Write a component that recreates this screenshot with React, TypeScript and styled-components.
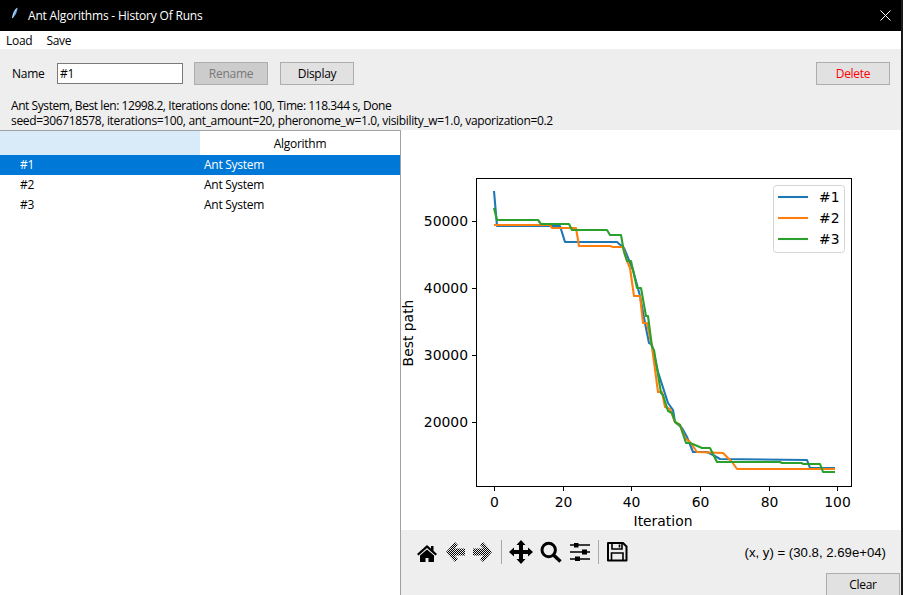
import styled, { createGlobalStyle } from "styled-components";

const GlobalStyle = createGlobalStyle`
  html, body {
    margin: 0;
    padding: 0;
    background: #f0f0f0;
  }
  * {
    box-sizing: border-box;
  }
`;

const Window = styled.div`
  display: flex;
  flex-direction: column;
  width: 903px;
  height: 595px;
  overflow: hidden;
  padding-right: 2px;
  background: #1a1a1a;
  font-family: "Open Sans", "Noto Sans", "Liberation Sans", sans-serif;
  font-size: 12px;
  letter-spacing: -0.28px;
  color: #000;
`;

const TitleBar = styled.div`
  display: flex;
  align-items: center;
  flex: 0 0 31px;
  padding: 0 10px 1px 11px;
  background: #000;
  color: #fff;
`;

const TitleIcon = styled.svg`
  display: block;
  width: 8px;
  height: 12px;
  margin-bottom: 4px;
`;

const TitleText = styled.div`
  flex: 1;
  margin-left: 9px;
  letter-spacing: -0.19px;
`;

const MenuBar = styled.div`
  display: flex;
  flex: 0 0 18px;
  gap: 14px;
  align-items: center;
  padding: 0 6px;
  background: #fff;
`;

const TopPanel = styled.div`
  flex: 0 0 81px;
  padding: 13px 11px 0 12px;
  background: #eeeeee;
`;

const FormRow = styled.div`
  display: flex;
  align-items: center;
`;

const NameLabel = styled.span`
  width: 45px;
`;

const NameInput = styled.input`
  width: 126px;
  height: 21px;
  margin-right: 11px;
  padding: 0 2px;
  border: 1px solid #7a7a7a;
  background: #fff;
  font: inherit;
  letter-spacing: inherit;
  color: #000;
  outline: none;
`;

const ButtonGroup = styled.div`
  display: flex;
  gap: 12px;
`;

const Button = styled.button<{ $tone?: "muted" | "danger" }>`
  flex: none;
  width: 74px;
  height: 23px;
  padding: 0;
  border: 1px solid #adadad;
  background: ${(p) => (p.$tone === "muted" ? "#cccccc" : "#e1e1e1")};
  font: inherit;
  letter-spacing: inherit;
  color: ${(p) =>
    p.$tone === "muted" ? "#787878" : p.$tone === "danger" ? "#ff0000" : "#000"};
`;

const Spacer = styled.div`
  flex: 1;
`;

const InfoText = styled.div`
  margin: 13px 0 0 -1px;
`;

const InfoLine = styled.div<{ $spacing: number }>`
  height: 15px;
  line-height: 15px;
  white-space: nowrap;
  letter-spacing: ${(p) => p.$spacing}px;
`;

const Body = styled.div`
  display: flex;
  flex: 1;
  min-height: 0;
`;

const RunList = styled.div`
  flex: 0 0 401px;
  border-top: 1px solid #a0a0a0;
  border-right: 1px solid #a0a0a0;
  background: #fff;
`;

const HeaderRow = styled.div`
  display: grid;
  grid-template-columns: 200px 200px;
  height: 24px;
  align-items: center;
`;

const TreeHeader = styled.div`
  height: 100%;
  background: #d9ebf9;
`;

const AlgoHeader = styled.div`
  text-align: center;
`;

const RunRow = styled.div<{ $selected?: boolean }>`
  display: grid;
  grid-template-columns: 200px 200px;
  height: 20px;
  padding-bottom: 1px;
  align-items: center;
  background: ${(p) => (p.$selected ? "#0078d7" : "#fff")};
  color: ${(p) => (p.$selected ? "#fff" : "#000")};
`;

const RunName = styled.span`
  padding-left: 20px;
`;

const RunAlgo = styled.span`
  padding-left: 4px;
`;

const RightPanel = styled.div`
  display: flex;
  flex-direction: column;
  flex: 1;
  min-width: 0;
  background: #eeeeee;
`;

const ChartFrame = styled.div`
  flex: 0 0 400px;
  background: #fff;
`;

const ChartSvg = styled.svg`
  display: block;
  width: 100%;
  height: 100%;
  font-family: "DejaVu Sans", sans-serif;
  font-size: 13.9px;
  letter-spacing: normal;
`;

const PlotToolbar = styled.div`
  display: flex;
  flex: 0 0 43px;
  align-items: center;
  padding: 1px 15px 0 14px;
`;

const ToolGroup = styled.div<{ $gap: number }>`
  display: flex;
  gap: ${(p) => p.$gap}px;
`;

const ToolIcon = styled.svg`
  display: block;
  width: 24px;
  height: 24px;
`;

const ToolDivider = styled.div<{ $before: number; $after: number }>`
  width: 1px;
  height: 24px;
  margin: 0 ${(p) => p.$after}px 0 ${(p) => p.$before}px;
  background: #a8a8a8;
`;

const Coordinates = styled.div`
  margin-left: auto;
  font-family: "Liberation Sans", Arial, sans-serif;
  font-size: 13.2px;
  letter-spacing: normal;
`;

const ClearRow = styled.div`
  display: flex;
  flex: none;
  justify-content: flex-end;
  padding-right: 1px;
`;

const runs = [
  { name: "#1", algo: "Ant System" },
  { name: "#2", algo: "Ant System" },
  { name: "#3", algo: "Ant System" },
];

// plot curves in screen pixels, read off the figure
const series = [
  {
    label: "#1",
    color: "#1f77b4",
    points:
      "494,191 497,226 560,226 565,242 617,242 624,248 633,270 640,296 645,323 649,343 652,345 658,372 668,403 673,410 675,422 682,428 687,437 693,452 707,452 713,455 720,459 807,460 810,468 835,468",
  },
  {
    label: "#2",
    color: "#ff7f0e",
    points:
      "494,225 550,225 552,228 576,228 579,246 610,246 613,247 623,247 627,261 630,268 634,296 640,296 643,323 647,323 652,347 658,392 662,392 665,407 670,409 675,422 680,425 685,438 690,442 697,452 723,453 732,462 737,469 835,469",
  },
  {
    label: "#3",
    color: "#2ca02c",
    points:
      "494,208 497,220 538,220 541,224 569,224 572,230 607,230 610,235 621,235 624,252 627,261 631,261 637,288 641,288 646,316 648,316 652,347 654,350 661,393 663,395 668,411 672,413 675,422 680,425 686,443 690,443 695,445 702,448 710,448 717,462 780,462 782,463 802,463 803,464 820,464 823,472 835,472",
  },
];

const xTicks = [0, 20, 40, 60, 80, 100];
const yTicks = [
  { label: "50000", y: 221 },
  { label: "40000", y: 288 },
  { label: "30000", y: 355 },
  { label: "20000", y: 422 },
];

function ResultChart() {
  return (
    <ChartSvg viewBox="401 130 500 400">
      <rect x="476.5" y="178.5" width="375" height="308" fill="#fff" stroke="#000" strokeWidth="1" />
      {xTicks.map((t) => {
        const x = Math.round(494 + t * 3.434) + 0.5;
        return (
          <g key={t}>
            <line x1={x} x2={x} y1="487" y2="491" stroke="#000" />
            <text x={x} y="507" textAnchor="middle">{t}</text>
          </g>
        );
      })}
      {yTicks.map((t) => (
        <g key={t.label}>
          <line x1="472" x2="476" y1={t.y + 0.5} y2={t.y + 0.5} stroke="#000" />
          <text x="468" y={t.y + 5} textAnchor="end">{t.label}</text>
        </g>
      ))}
      <text x="663" y="526" textAnchor="middle">Iteration</text>
      <text transform="translate(413 333) rotate(-90)" textAnchor="middle">Best path</text>
      {series.map((s) => (
        <polyline key={s.label} points={s.points} fill="none" stroke={s.color} strokeWidth="2.1" strokeLinejoin="round" />
      ))}
      <rect x="773.5" y="185.5" width="71" height="67" rx="3" fill="#fff" stroke="#d5d5d5" />
      {series.map((s, i) => (
        <g key={s.label}>
          <line x1="778" x2="808" y1={197 + i * 21} y2={197 + i * 21} stroke={s.color} strokeWidth="2.1" />
          <text x="819" y={202 + i * 21}>{s.label}</text>
        </g>
      ))}
    </ChartSvg>
  );
}

function HomeIcon() {
  return (
    <ToolIcon viewBox="0 0 24 24">
      <path d="M12 5 L2 14 L3.5 15.5 L12 8 L20.5 15.5 L22 14 L18.5 10.8 V6 H16 V8.5 Z" fill="#000" />
      <path d="M5 15.5 L12 9.5 L19 15.5 V22 H13.5 V18 H10.5 V22 H5 Z" fill="#000" />
    </ToolIcon>
  );
}

function ArrowIcon({ flip }: { flip?: boolean }) {
  const id = flip ? "ditherRight" : "ditherLeft";
  return (
    <ToolIcon viewBox="0 0 24 24">
      <defs>
        <pattern id={id} width="2" height="2" patternUnits="userSpaceOnUse">
          <rect width="1" height="1" fill="#000" />
          <rect x="1" y="1" width="1" height="1" fill="#000" />
        </pattern>
      </defs>
      <path
        d={
          flip
            ? "M21 12 L12 2 L9 5 L12.5 8.5 H2 V15.5 H12.5 L9 19 L12 22 Z"
            : "M3 12 L12 2 L15 5 L11.5 8.5 H22 V15.5 H11.5 L15 19 L12 22 Z"
        }
        fill={`url(#${id})`}
      />
    </ToolIcon>
  );
}

function MoveIcon() {
  return (
    <ToolIcon viewBox="0 0 24 24">
      <path d="M12 0 L16.5 5 H14 V10 H19 V7.5 L24 12 L19 16.5 V14 H14 V19 H16.5 L12 24 L7.5 19 H10 V14 H5 V16.5 L0 12 L5 7.5 V10 H10 V5 H7.5 Z" fill="#000" />
    </ToolIcon>
  );
}

function ZoomIcon() {
  return (
    <ToolIcon viewBox="0 0 24 24">
      <circle cx="9.7" cy="10" r="6.7" fill="none" stroke="#000" strokeWidth="3" />
      <path d="M14.5 15 L21.5 21.5" stroke="#000" strokeWidth="3.5" />
    </ToolIcon>
  );
}

function SlidersIcon() {
  return (
    <ToolIcon viewBox="0 0 24 24">
      <path d="M1 5 H21 M1 12 H21 M1 19 H21" stroke="#000" strokeWidth="1.6" />
      <rect x="5" y="3" width="4.5" height="4.5" fill="#000" />
      <rect x="13" y="9.5" width="5" height="5" fill="#000" />
      <rect x="6" y="16.5" width="5" height="4.5" fill="#000" />
    </ToolIcon>
  );
}

function SaveIcon() {
  return (
    <ToolIcon viewBox="0 0 24 24">
      <path d="M3 3 H18 L21.5 6.5 V20.5 H3 Z" fill="none" stroke="#000" strokeWidth="2" strokeLinejoin="round" />
      <path d="M7 3.5 V9 H17 V3.5 M14.5 4.5 V7.5" fill="none" stroke="#000" strokeWidth="1.6" />
      <path d="M6.5 20 V13 H18 V20" fill="none" stroke="#000" strokeWidth="1.6" />
    </ToolIcon>
  );
}

export default function App() {
  return (
    <>
      <GlobalStyle />
      <Window>
        <TitleBar>
          <TitleIcon viewBox="0 0 8 12">
            <path d="M6.5 0.5 C3.5 2 1.5 6 1 11.5 C4 9.5 6.5 5 6.5 0.5 Z" fill="#6ea6e0" />
            <path d="M5.8 1.5 C3.8 4 2.3 7.5 1.5 11" fill="none" stroke="#e6f0fa" strokeWidth="0.7" />
          </TitleIcon>
          <TitleText>Ant Algorithms - History Of Runs</TitleText>
          <svg width="11" height="11" viewBox="0 0 11 11">
            <path d="M0.5 0.5 L10.5 10.5 M10.5 0.5 L0.5 10.5" stroke="#fff" strokeWidth="1" />
          </svg>
        </TitleBar>
        <MenuBar>
          <span>Load</span>
          <span>Save</span>
        </MenuBar>
        <TopPanel>
          <FormRow>
            <NameLabel>Name</NameLabel>
            <NameInput defaultValue="#1" />
            <ButtonGroup>
              <Button $tone="muted">Rename</Button>
              <Button>Display</Button>
            </ButtonGroup>
            <Spacer />
            <Button $tone="danger">Delete</Button>
          </FormRow>
          <InfoText>
            <InfoLine $spacing={-0.43}>
              Ant System, Best len: 12998.2, Iterations done: 100, Time: 118.344 s, Done
            </InfoLine>
            <InfoLine $spacing={-0.34}>
              seed=306718578, iterations=100, ant_amount=20, pheronome_w=1.0, visibility_w=1.0, vaporization=0.2
            </InfoLine>
          </InfoText>
        </TopPanel>
        <Body>
          <RunList>
            <HeaderRow>
              <TreeHeader />
              <AlgoHeader>Algorithm</AlgoHeader>
            </HeaderRow>
            {runs.map((r, i) => (
              <RunRow key={r.name} $selected={i === 0}>
                <RunName>{r.name}</RunName>
                <RunAlgo>{r.algo}</RunAlgo>
              </RunRow>
            ))}
          </RunList>
          <RightPanel>
            <ChartFrame>
              <ResultChart />
            </ChartFrame>
            <PlotToolbar>
              <ToolGroup $gap={4}>
                <HomeIcon />
                <ArrowIcon />
                <ArrowIcon flip />
              </ToolGroup>
              <ToolDivider $before={6} $after={7} />
              <ToolGroup $gap={6}>
                <MoveIcon />
                <ZoomIcon />
                <SlidersIcon />
              </ToolGroup>
              <ToolDivider $before={5} $after={6} />
              <SaveIcon />
              <Coordinates>(x, y) = (30.8, 2.69e+04)</Coordinates>
            </PlotToolbar>
            <ClearRow>
              <Button>Clear</Button>
            </ClearRow>
          </RightPanel>
        </Body>
      </Window>
    </>
  );
}
